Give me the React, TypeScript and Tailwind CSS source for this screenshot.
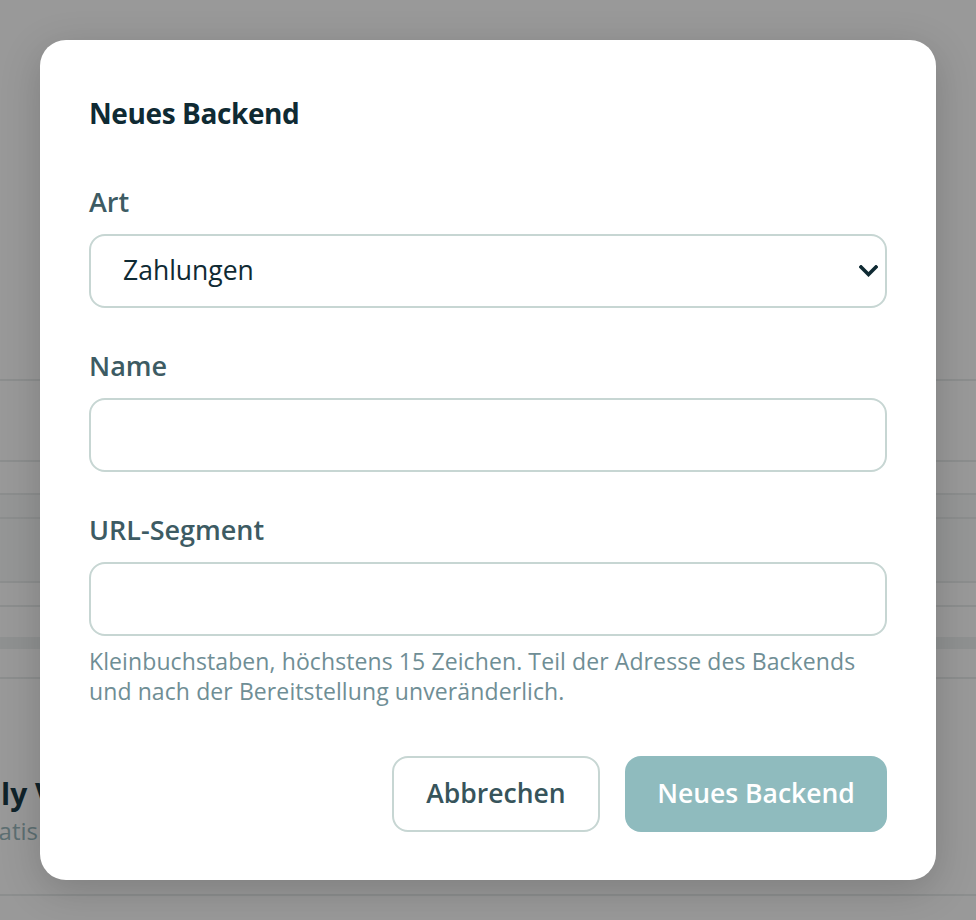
import React from "react";

const font = { fontFamily: "'Open Sans', 'Noto Sans', sans-serif" };

export default function App() {
  return (
    <div className="relative w-[976px] h-[920px] overflow-hidden bg-[#999999]" style={font}>
      {/* background page (dimmed) */}
      <div className="flex flex-col">
        <div className="h-[381px] border-b-2 border-[#8c8e8e]" />
        <div className="h-[81px] border-b-2 border-[#8c8e8e]" />
        <div className="h-[33px] border-b-2 border-[#8c8e8e]" />
        <div className="h-[24px] border-b-2 border-[#8c8e8e] bg-[#959696]" />
        <div className="h-[64px] border-b-2 border-[#8c8e8e] bg-[#959696] flex items-center pt-[8px]">
          <span className="text-[27px] text-[#2c3d42] -ml-[16px] leading-none">n</span>
        </div>
        <div className="h-[24px] border-b-2 border-[#8c8e8e]" />
        <div className="h-[30px]" />
        <div className="h-[12px] bg-[#8f9191]" />
        <div className="h-[30px] border-b-2 border-[#8c8e8e]" />
        <div className="h-[200px] flex flex-col justify-center">
          <span className="text-[30px] font-bold text-[#10232a] leading-[36px] ml-[1px] mt-[64px]">ly V</span>
          <span className="text-[24px] text-[#5d6f72] leading-[30px] -ml-[10px] mt-[4px]">tatis</span>
        </div>
        <div className="h-[17px] border-b-2 border-[#8c8e8e]" />
      </div>

      {/* dialog */}
      <div className="absolute left-[40px] top-[40px] w-[896px] h-[840px] bg-white rounded-[26px] shadow-[0_10px_40px_rgba(0,0,0,0.18)] px-[49px] pt-[55px] flex flex-col">
        <h2 className="text-[28px] leading-[36px] font-bold text-[#0f2a33] tracking-[-0.4px]">Neues Backend</h2>

        <div className="mt-[55px] flex flex-col">
          <label className="text-[27px] leading-[32px] font-semibold text-[#3d5b63]">Art</label>
          <div className="mt-[16px] h-[74px] border-2 border-[#c7d6d3] rounded-[16px] flex items-center justify-between pl-[32px] pr-[7px]">
            <span className="text-[26.5px] text-[#0f2a33]">Zahlungen</span>
            <svg width="19" height="12" viewBox="0 0 19 12" fill="none">
              <path d="M2 2 L9.5 9.5 L17 2" stroke="#0f2a33" strokeWidth="3.6" strokeLinecap="square" />
            </svg>
          </div>
        </div>

        <div className="mt-[42px] flex flex-col">
          <label className="text-[27px] leading-[32px] font-semibold text-[#3d5b63]">Name</label>
          <div className="mt-[16px] h-[74px] border-2 border-[#c7d6d3] rounded-[16px]" />
        </div>

        <div className="mt-[42px] flex flex-col">
          <label className="text-[27px] leading-[32px] font-semibold text-[#3d5b63]">URL-Segment</label>
          <div className="mt-[16px] h-[74px] border-2 border-[#c7d6d3] rounded-[16px]" />
          <p className="mt-[10px] text-[23px] leading-[30px] text-[#6f8e95] tracking-[0.1px]">
            Kleinbuchstaben, höchstens 15 Zeichen. Teil der Adresse des Backends
            <br />
            und nach der Bereitstellung unveränderlich.
          </p>
        </div>

        <div className="mt-[50px] flex justify-end gap-[25px]">
          <button className="w-[208px] h-[76px] border-2 border-[#c7d6d3] rounded-[16px] text-[26.5px] font-semibold text-[#37545b] bg-white">
            Abbrechen
          </button>
          <button className="w-[262px] h-[76px] rounded-[16px] text-[26.5px] font-semibold text-white bg-[#8fbbbe]">
            Neues Backend
          </button>
        </div>
      </div>
    </div>
  );
}
